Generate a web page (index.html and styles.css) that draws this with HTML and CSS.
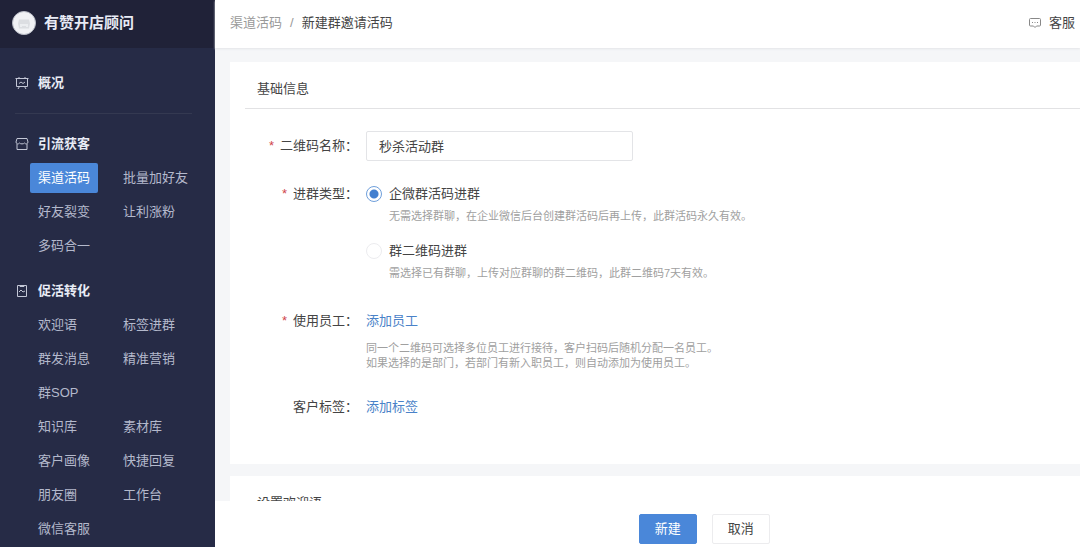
FILE: index.html
```
<!DOCTYPE html>
<html lang="zh-CN">
<head>
  <meta charset="UTF-8" />
  <meta name="viewport" content="width=device-width, initial-scale=1.0"/>
  <title>新建群邀请活码</title>
  <link rel="stylesheet" href="styles.css">
</head>
<body>
  <aside class="sidebar">
    <div class="brand">
      <svg class="brand-logo" viewBox="0 0 24 24" aria-hidden="true">
        <circle cx="12" cy="12" r="11.5" fill="#f1f2f5" stroke="#b9bcc6"/>
        <path d="M7 8.500h10l1 4-1 5H7l-1-5z" fill="#dcdee2" stroke="none"/>
        <path d="M8 13h8v3h-2v-1h-4v1H8z" fill="#eceef1" stroke="none"/>
      </svg>
      <span>有赞开店顾问</span>
    </div>

    <nav class="menu">
      <h2 class="menu-title">
        <svg viewBox="0 0 14 14" aria-hidden="true">
          <path d="M1.500 2.500h11v8h-11zM.5 2.500h13M4 1v1.500M10 1v1.500M4.500 10.500L3 13M9.500 10.500L11 13M4 7.500l2-1.500 2 1.500 2-1.500"/>
        </svg>
        <span>概况</span>
      </h2>
      <hr class="menu-line">

      <h2 class="menu-title">
        <svg viewBox="0 0 14 14" aria-hidden="true">
          <path d="M2 1.500h10l1 3.500c0 2-2.500 2.500-3.500 1-1 1.200-4 1.200-5 0-1 1.500-3.500 1-3.500-1zM2 7v5.500h10V7"/>
        </svg>
        <span>引流获客</span>
      </h2>
      <div class="menu-items">
        <a href="#" class="active">渠道活码</a>
        <a href="#">批量加好友</a>
        <a href="#">好友裂变</a>
        <a href="#">让利涨粉</a>
        <a href="#">多码合一</a>
      </div>

      <h2 class="menu-title">
        <svg viewBox="0 0 14 14" aria-hidden="true">
          <path d="M2.500 1.500h9v11h-9zM5 1.500v1h4v-1M4 8l2-2 2 2 2-1"/>
        </svg>
        <span>促活转化</span>
      </h2>
      <div class="menu-items">
        <a href="#">欢迎语</a>
        <a href="#">标签进群</a>
        <a href="#">群发消息</a>
        <a href="#">精准营销</a>
        <a href="#">群SOP</a>
        <a href="#" class="new-row">知识库</a>
        <a href="#">素材库</a>
        <a href="#">客户画像</a>
        <a href="#">快捷回复</a>
        <a href="#">朋友圈</a>
        <a href="#">工作台</a>
        <a href="#">微信客服</a>
      </div>
    </nav>
  </aside>

  <div class="page">
    <header class="topbar">
      <div class="breadcrumb">
        <a href="#">渠道活码</a>
        <span class="slash">/</span>
        <span>新建群邀请活码</span>
      </div>
      <a href="#" class="service">
        <svg viewBox="0 0 12 10" aria-hidden="true">
          <path d="M1.500.5h9q1 0 1 1v5.500q0 1-1 1H7.500L6 9.500 4.500 8h-3q-1 0-1-1V1.500q0-1 1-1z"/>
          <path d="M3 4.500h1M5.500 4.500h1M8 4.500h1"/>
        </svg>
        <span>客服</span>
      </a>
    </header>

    <main class="content">
      <section class="card">
        <h3 class="card-title">基础信息</h3>
        <form class="form" id="code-form">
          <div class="form-row">
            <label class="form-label required" for="code-name">二维码名称：</label>
            <input type="text" id="code-name" class="text-input" value="秒杀活动群">
          </div>

          <div class="form-row" role="radiogroup" aria-labelledby="type-label">
            <span class="form-label required" id="type-label">进群类型：</span>
            <div class="options">
              <div class="option">
                <input type="radio" name="type" id="type-work" checked>
                <label for="type-work">企微群活码进群</label>
                <p class="hint">无需选择群聊，在企业微信后台创建群活码后再上传，此群活码永久有效。</p>
              </div>
              <div class="option">
                <input type="radio" name="type" id="type-qr">
                <label for="type-qr">群二维码进群</label>
                <p class="hint">需选择已有群聊，上传对应群聊的群二维码，此群二维码7天有效。</p>
              </div>
            </div>
          </div>

          <div class="form-row">
            <span class="form-label required">使用员工：</span>
            <div>
              <a href="#" class="add-link">添加员工</a>
              <p class="hint staff-hint">同一个二维码可选择多位员工进行接待，客户扫码后随机分配一名员工。<br>如果选择的是部门，若部门有新入职员工，则自动添加为使用员工。</p>
            </div>
          </div>

          <div class="form-row">
            <span class="form-label">客户标签：</span>
            <div><a href="#" class="add-link">添加标签</a></div>
          </div>
        </form>
      </section>

      <section class="card">
        <h3 class="card-title">设置欢迎语</h3>
      </section>
    </main>

    <footer class="actions">
      <button type="submit" form="code-form" class="btn btn-primary">新建</button>
      <button type="button" class="btn">取消</button>
    </footer>
  </div>
</body>
</html>
```
FILE: styles.css
```
* {
  box-sizing: border-box;
}
body {
  margin: 0;
  display: flex;
  height: 100vh;
  overflow: hidden;
  background: #f5f6f8;
  color: #444;
  font-family: "Liberation Sans", "Noto Sans CJK SC", sans-serif;
  font-size: 13px;
  line-height: 20px;
}
h2, h3, p {
  margin: 0;
}
a {
  color: inherit;
  text-decoration: none;
}
svg {
  fill: none;
  stroke: currentColor;
  flex: none;
}

/* sidebar */
.sidebar {
  width: 215px;
  flex: none;
  overflow: hidden;
  background: #262b46;
  color: #e8ebf5;
}
.brand {
  display: flex;
  align-items: center;
  gap: 8px;
  height: 48px;
  padding: 0 12px 2px;
  background: #202238;
  font-size: 15px;
  font-weight: 700;
}
.brand-logo {
  width: 24px;
  height: 24px;
}
.menu {
  padding: 25px 15px 0;
}
.menu-title {
  display: flex;
  align-items: center;
  gap: 9px;
  font-size: 13px;
  font-weight: 700;
}
.menu-title svg {
  width: 14px;
  height: 14px;
  color: #c3c7d6;
}
.menu-line {
  margin: 20px 8px 20px 0;
  border: 0;
  border-top: 1px solid #343951;
}
.menu-items {
  display: grid;
  grid-template-columns: 85px 85px;
  justify-items: start;
  row-gap: 4px;
  margin: 9px 0 20px 15px;
}
.menu-items a {
  padding: 0 8px;
  border-radius: 2px;
  color: #b4b9cc;
  line-height: 30px;
  white-space: nowrap;
}
.menu-items .active {
  background: #4a87d9;
  color: #fff;
}
.menu-items .new-row {
  grid-column: 1;
}

/* page */
.page {
  display: flex;
  flex: 1;
  flex-direction: column;
  min-width: 0;
}
.topbar {
  display: flex;
  align-items: center;
  justify-content: space-between;
  height: 48px;
  flex: none;
  padding: 0 5px 2px 15px;
  background: #fff;
  box-shadow: 0 1px 2px #e4e5e8;
}
.breadcrumb {
  display: flex;
  gap: 8px;
}
.breadcrumb a, .slash {
  color: #999;
}
.service {
  display: flex;
  align-items: center;
  gap: 8px;
}
.service svg {
  width: 12px;
  height: 10px;
  color: #888;
}
.content {
  flex: 1;
  min-height: 0;
  overflow: hidden;
  padding: 14px 0 0 15px;
}
.card {
  margin-bottom: 12px;
  padding: 17px 0 47px 15px;
  background: #fff;
}
.card-title {
  padding: 0 12px 9px;
  border-bottom: 1px solid #e2e2e4;
  font-size: 13px;
  font-weight: 400;
}

/* form */
.form {
  display: flex;
  flex-direction: column;
  gap: 26px;
  padding-top: 22px;
}
.form-row {
  display: grid;
  grid-template-columns: 113px 1fr;
  column-gap: 8px;
}
.form-row:first-child {
  align-items: center;
  margin-bottom: -3px;
}
.form-label {
  text-align: right;
}
.required::before {
  content: "*";
  margin-right: 6px;
  color: #d0454c;
}
.text-input {
  width: 267px;
  height: 30px;
  padding: 0 12px 2px;
  border: 1px solid #e3e4e7;
  border-radius: 2px;
  background: #fff;
  color: #444;
  font: inherit;
}
.options {
  display: grid;
  gap: 17px;
  padding-bottom: 4px;
}
.option {
  display: grid;
  grid-template-columns: 16px 1fr;
  align-items: center;
  gap: 5px 7px;
}
.option input {
  appearance: none;
  width: 16px;
  height: 16px;
  margin: 0;
  border: 1px solid #ececef;
  border-radius: 50%;
  background: #fff;
}
.option input:checked {
  border-color: #6f9fdb;
  background: radial-gradient(circle, #4480cf 4px, #fff 5px);
}
.hint {
  color: #a0a0a0;
  font-size: 11px;
  line-height: 15px;
}
.option .hint {
  grid-column: 2;
}
.staff-hint {
  margin-top: 10px;
}
.add-link {
  color: #4a82c8;
}

/* bottom bar */
.actions {
  display: flex;
  flex: none;
  gap: 15px;
  padding: 13px 0 3px 49%;
  background: #fff;
}
.btn {
  height: 30px;
  padding: 0 15px;
  border: 1px solid #ececee;
  border-radius: 2px;
  background: #fff;
  color: #444;
  font: inherit;
}
.btn-primary {
  border-color: #4a87d9;
  background: #4a87d9;
  color: #fff;
}
```
